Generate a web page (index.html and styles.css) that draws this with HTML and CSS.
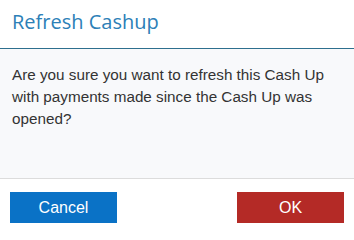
FILE: index.html
```html
<!DOCTYPE html>
<html>
<head>
<meta charset="utf-8">
<link rel="stylesheet" href="styles.css">
</head>
<body>
<div class="modal">
  <div class="modal-header"><h1 class="modal-title">Refresh Cashup</h1></div>
  <div class="modal-body">
    <p class="message">Are you sure you want to refresh this Cash Up with payments made since the Cash Up was opened?</p>
  </div>
  <div class="modal-footer">
    <button class="btn btn-cancel">Cancel</button>
    <button class="btn btn-ok">OK</button>
  </div>
</div>
</body>
</html>
```
FILE: styles.css
```css
html, body {
  margin: 0;
  padding: 0;
  background: #ffffff;
}
.modal {
  width: 354px;
  height: 236px;
  display: flex;
  flex-direction: column;
  background: #ffffff;
}
.modal-header {
  height: 48px;
  box-sizing: content-box;
  padding: 0 12px;
  border-bottom: 1px solid #2d6f8e;
}
.modal-title {
  margin: 0;
  padding-top: 8px;
  font-family: "Open Sans", sans-serif;
  font-weight: 400;
  font-size: 20px;
  line-height: 28px;
  color: #2c80b7;
}
.modal-body {
  height: 130px;
  background: #f8f9fb;
  border-bottom: 1px solid #dcdcdc;
  padding: 15px 12px 0;
  box-sizing: border-box;
}
.message {
  margin: 0;
  font-family: "Liberation Sans", Arial, sans-serif;
  font-size: 15.25px;
  line-height: 22px;
  color: #333333;
}
.modal-footer {
  flex: 1;
  display: flex;
  justify-content: space-between;
  padding: 13px 10px 0;
}
.btn {
  width: 107px;
  height: 31px;
  border: none;
  border-radius: 0;
  padding: 0;
  font-family: "Liberation Sans", Arial, sans-serif;
  font-size: 16px;
  color: #ffffff;
}
.btn-cancel {
  background: #0a72c6;
}
.btn-ok {
  background: #b42a26;
}
```
